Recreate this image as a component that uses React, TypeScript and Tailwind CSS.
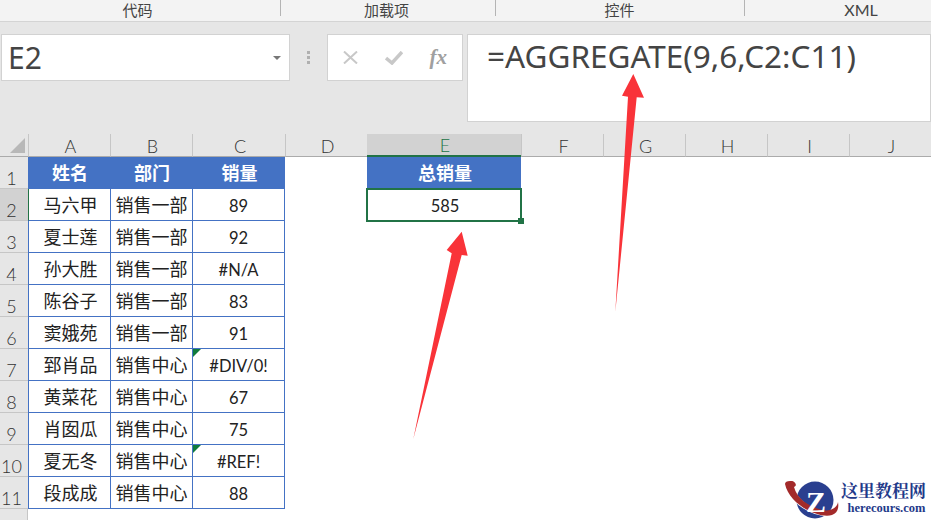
import React from "react";

const cjk = '"Noto Sans CJK SC", "Noto Sans", sans-serif';
const latin = "Lato, sans-serif";
const rows: [string, string, string, boolean?][] = [
  ["马六甲", "销售一部", "89"],
  ["夏士莲", "销售一部", "92"],
  ["孙大胜", "销售一部", "#N/A"],
  ["陈谷子", "销售一部", "83"],
  ["窦娥苑", "销售一部", "91"],
  ["郅肖品", "销售中心", "#DIV/0!", true],
  ["黄菜花", "销售中心", "67"],
  ["肖囡瓜", "销售中心", "75"],
  ["夏无冬", "销售中心", "#REF!", true],
  ["段成成", "销售中心", "88"],
];
const cols = ["A", "B", "C", "D", "E", "F", "G", "H", "I", "J"];

function RowHead({ n, active }: { n: number; active?: boolean }) {
  return (
    <div
      className={`flex h-[32px] items-end justify-center border-b border-[#c6c6c6] pr-[5px] text-[18px] font-light leading-[20px] text-[#333] ${active ? "bg-[#d2d2d2]" : "bg-[#e6e6e6]"}`}
      style={{ fontFamily: latin }}
    >
      {n}
    </div>
  );
}

export default function App() {
  return (
    <div className="relative h-[520px] w-[931px] overflow-hidden bg-white" style={{ fontFamily: cjk }}>
      {/* Ribbon group labels */}
      <div className="grid h-[22px] grid-cols-[281px_215px_249px_186px] border-b border-[#d4d4d4] bg-[#f3f3f3] text-[15px] leading-[19px] text-[#444]">
        <div className="relative pr-[6px] text-center">代码<div className="absolute right-0 top-0 h-[16px] w-px bg-[#b4b4b4]" /></div>
        <div className="relative pr-[4px] text-center">加载项<div className="absolute right-0 top-0 h-[16px] w-px bg-[#b4b4b4]" /></div>
        <div className="relative pr-[2px] text-center">控件<div className="absolute right-0 top-0 h-[16px] w-px bg-[#b4b4b4]" /></div>
        <div className="pl-[46px] text-center text-[16px]" style={{ fontFamily: latin }}>XML</div>
      </div>

      {/* Formula bar */}
      <div className="flex h-[112px] items-start gap-[4px] bg-[#e6e6e6] pl-[1px] pt-[12px]">
        <div className="flex h-[47px] w-[289px] items-center justify-between border border-[#d2d2d2] bg-white pl-[6px] pr-[8px] text-[30px] leading-none text-[#444]" style={{ fontFamily: '"Noto Sans", sans-serif' }}>
          <span>E2</span>
          <div className="h-0 w-0 border-x-[4px] border-t-[4px] border-x-transparent border-t-[#777]" />
        </div>
        <div className="flex h-[47px] w-[29px] flex-col items-center justify-center gap-[2px]">
          <div className="size-[3px] bg-[#b0b0b0]" />
          <div className="size-[3px] bg-[#b0b0b0]" />
          <div className="size-[3px] bg-[#b0b0b0]" />
        </div>
        <div className="flex h-[47px] w-[136px] items-center justify-between border border-[#d2d2d2] bg-white pl-[15px] pr-[15px]">
          <svg width="15" height="13" viewBox="0 0 15 13" fill="none" stroke="#c8c8c8" strokeWidth="2"><path d="M1 0.5 L14 12.5 M14 0.5 L1 12.5" /></svg>
          <svg width="18" height="14" viewBox="0 0 18 14" fill="none" stroke="#c8c8c8" strokeWidth="3.5"><path d="M1 7 L7 12 L17 1" /></svg>
          <span className="text-[21px] font-bold italic leading-none text-[#a0a0a0]" style={{ fontFamily: '"Liberation Serif", serif' }}>fx</span>
        </div>
        <div className="h-[88px] flex-1 border border-[#d2d2d2] bg-white pl-[19px] pt-[1px] text-[31.5px] leading-[40px] text-[#444]" style={{ fontFamily: '"Noto Sans", sans-serif' }}>
          =AGGREGATE(9,6,C2:C11)
        </div>
      </div>

      {/* Sheet */}
      <div className="grid grid-cols-[28px_82px_82px_93px_82px_154px_82px_82px_82px_82px_82px] grid-rows-[23px_32px_repeat(10,32px)_auto] text-[18px] leading-[20px]">
        {/* corner */}
        <div className="relative h-[23px] border-b border-[#ababab] bg-[#e6e6e6]">
          <div className="absolute bottom-[3px] right-[3px] h-0 w-0 border-b-[15px] border-l-[15px] border-b-[#b8b8b8] border-l-transparent" />
        </div>
        {cols.map((c) => (
          <div
            key={c}
            className={`flex h-[23px] items-end justify-center pl-[2px] text-[18px] font-light ${c === "E" ? "border-b-2 border-[#217346] bg-[#d2d2d2] text-[#217346]" : "border-b border-l border-[#ababab] border-l-[#c6c6c6] bg-[#e6e6e6] text-[#333]"}`}
            style={{ fontFamily: latin }}
          >
            {c}
          </div>
        ))}

        {/* Row 1 */}
        <RowHead n={1} />
        {["姓名", "部门", "销量"].map((t) => (
          <div key={t} className="flex h-[32px] items-center justify-center bg-[#4472c4] pb-[2px] pl-[2px] font-bold text-white">{t}</div>
        ))}
        <div />
        <div className="flex h-[32px] items-center justify-center bg-[#4472c4] pb-[2px] pl-[2px] font-bold text-white">总销量</div>
        <div className="col-span-5" />

        {rows.map(([a, b, c, flag], i) => (
          <React.Fragment key={a}>
            <RowHead n={i + 2} active={i === 0} />
            <div className={`flex h-[32px] items-center justify-center border-b border-l border-[#4472c4] pb-[2px] pl-[2px] text-[#222] ${i === 0 ? "border-l-[#217346]" : ""}`}>{a}</div>
            <div className="flex h-[32px] items-center justify-center border-b border-l border-[#4472c4] pb-[2px] text-[#222]">{b}</div>
            <div className="relative flex h-[32px] items-center justify-center border-x border-b border-[#4472c4] pt-[2px] text-[16.5px] text-[#222]" style={{ fontFamily: latin }}>
              {c}
              {flag && <div className="absolute left-0 top-0 h-0 w-0 border-r-[8px] border-t-[8px] border-r-transparent border-t-[#0f7b3d]" />}
            </div>
            {i === 0 ? (
              <>
                <div />
                <div className="relative flex h-[32px] items-center justify-center pl-[2px] pt-[2px] text-[16.5px] text-[#222]" style={{ fontFamily: latin }}>
                  585
                  <div className="absolute -inset-[1px] border-2 border-[#217346]" />
                  <div className="absolute -bottom-[3px] -right-[3px] size-[6px] bg-[#217346]" />
                </div>
                <div className="col-span-5" />
              </>
            ) : (
              <div className="col-span-7" />
            )}
          </React.Fragment>
        ))}
        <div className="h-[12px] border-r border-[#c6c6c6] bg-[#e6e6e6]" />
      </div>

      {/* Annotation arrows */}
      <svg className="absolute left-0 top-0" width="931" height="520" viewBox="0 0 931 520">
        <polygon points="633.3,74 644,97.7 636.7,97.3 615.3,312 628,96.7 622,95.7" fill="#f93339" />
        <polygon points="461.7,231.7 467.7,255.7 461.7,255 413.3,439 451.7,253.3 446.7,250" fill="#f93339" />
      </svg>

      {/* Watermark logo */}
      <div className="absolute bottom-0 right-0 flex h-[48px] w-[151px] items-start gap-[1px] bg-white">
        <svg width="60" height="48" viewBox="0 0 60 48" className="shrink-0">
          <circle cx="35" cy="28" r="18.5" fill="#2a3f8f" />
          <path d="M4 12 C10 34 38 48 54 43 C60 40 59 34 57 29 C57 37 50 41 42 39 C26 35 14 24 13 11 Z" fill="#fff" />
          <path d="M5 12 C9 32 38 47 52 43 C58 41 59 35 58 30 C57 36 50 40 42 38 C27 34 17 26 14 15 C18 14 15 8 10 9 C7 9 5 10 5 12 Z" fill="#a32a2a" />
          <text x="36" y="40" textAnchor="middle" fontSize="30" fontWeight="bold" fontFamily="Liberation Serif, serif" fill="#fff">Z</text>
        </svg>
        <div className="flex flex-col items-center pt-[8px]">
          <div className="text-[17px] font-bold leading-[20px] text-[#1f3a8a]" style={{ fontFamily: '"Noto Serif CJK SC", "Noto Sans CJK SC", serif' }}>这里教程网</div>
          <div className="ml-[6px] mt-[2px] text-[12.5px] font-bold leading-[13px] text-[#1f3a8a]" style={{ fontFamily: '"Liberation Serif", serif' }}>herecours.com</div>
        </div>
      </div>
    </div>
  );
}
